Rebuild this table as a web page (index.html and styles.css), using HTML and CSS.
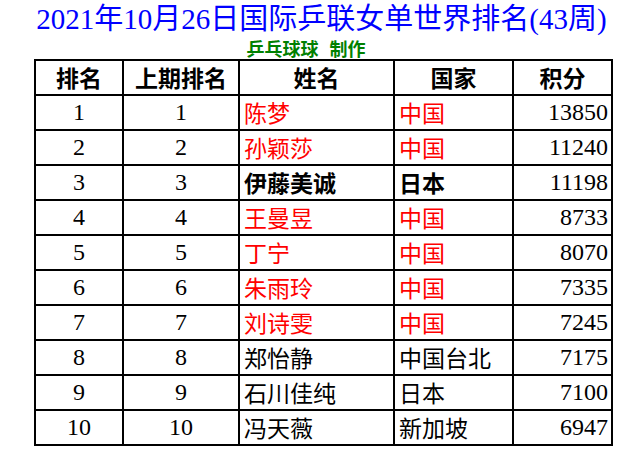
FILE: index.html
```html
<!DOCTYPE html>
<html lang="zh-CN">
<head>
<meta charset="utf-8">
<title>国际乒联女单世界排名</title>
<link rel="stylesheet" href="styles.css">
</head>
<body>
<div class="page">
  <h1 class="title">2021年10月26日国际乒联女单世界排名(43周)</h1>
  <div class="subtitle">乒乓球球<span class="gap"></span>制作</div>
  <table class="rank">
    <colgroup>
      <col class="c1"><col class="c2"><col class="c3"><col class="c4"><col class="c5">
    </colgroup>
    <thead>
      <tr><th>排名</th><th>上期排名</th><th>姓名</th><th>国家</th><th>积分</th></tr>
    </thead>
    <tbody>
      <tr class="red"><td class="num">1</td><td class="num">1</td><td class="txt">陈梦</td><td class="txt">中国</td><td class="pts">13850</td></tr>
      <tr class="red"><td class="num">2</td><td class="num">2</td><td class="txt">孙颖莎</td><td class="txt">中国</td><td class="pts">11240</td></tr>
      <tr class="bold"><td class="num">3</td><td class="num">3</td><td class="txt">伊藤美诚</td><td class="txt">日本</td><td class="pts">11198</td></tr>
      <tr class="red"><td class="num">4</td><td class="num">4</td><td class="txt">王曼昱</td><td class="txt">中国</td><td class="pts">8733</td></tr>
      <tr class="red"><td class="num">5</td><td class="num">5</td><td class="txt">丁宁</td><td class="txt">中国</td><td class="pts">8070</td></tr>
      <tr class="red"><td class="num">6</td><td class="num">6</td><td class="txt">朱雨玲</td><td class="txt">中国</td><td class="pts">7335</td></tr>
      <tr class="red"><td class="num">7</td><td class="num">7</td><td class="txt">刘诗雯</td><td class="txt">中国</td><td class="pts">7245</td></tr>
      <tr><td class="num">8</td><td class="num">8</td><td class="txt">郑怡静</td><td class="txt">中国台北</td><td class="pts">7175</td></tr>
      <tr><td class="num">9</td><td class="num">9</td><td class="txt">石川佳纯</td><td class="txt">日本</td><td class="pts">7100</td></tr>
      <tr><td class="num">10</td><td class="num">10</td><td class="txt">冯天薇</td><td class="txt">新加坡</td><td class="pts">6947</td></tr>
    </tbody>
  </table>
</div>
</body>
</html>
```
FILE: styles.css
```css
html, body {
  margin: 0;
  padding: 0;
  background: #ffffff;
}
.page {
  width: 643px;
  height: 464px;
  overflow: hidden;
}
.title {
  margin: 0;
  height: 38px;
  line-height: 38px;
  text-align: center;
  font-family: "Liberation Serif", "Noto Sans CJK SC", serif;
  font-weight: normal;
  font-size: 29px;
  color: #0000ff;
  white-space: nowrap;
}
.subtitle {
  height: 21px;
  line-height: 21px;
  text-align: center;
  padding-right: 31px;
  font-family: "Noto Sans CJK SC", sans-serif;
  font-weight: bold;
  font-size: 18px;
  color: #008000;
}
.gap {
  display: inline-block;
  width: 11px;
}
.rank {
  margin-left: 34px;
  border-collapse: collapse;
  table-layout: fixed;
  width: 578px;
  font-family: "Liberation Serif", "Noto Sans CJK SC", serif;
  font-size: 24px;
  color: #000000;
}
.c1 { width: 88px; }
.c2 { width: 116px; }
.c3 { width: 155px; }
.c4 { width: 119px; }
.c5 { width: 99px; }
.rank th, .rank td {
  border: 2px solid #000000;
  height: 33px;
  padding: 0;
  line-height: 33px;
  white-space: nowrap;
  overflow: hidden;
}
.rank th {
  font-family: "Noto Sans CJK SC", sans-serif;
  font-weight: bold;
  font-size: 23px;
  text-align: center;
}
.rank .num {
  text-align: center;
}
.rank .txt {
  font-family: "Noto Sans CJK SC", sans-serif;
  font-size: 23px;
  text-align: left;
  padding-left: 4px;
}
.rank .pts {
  text-align: right;
  padding-right: 3px;
}
.rank tr.red .txt {
  color: #ff0000;
}
.rank tr.bold .txt {
  font-weight: bold;
}
```
